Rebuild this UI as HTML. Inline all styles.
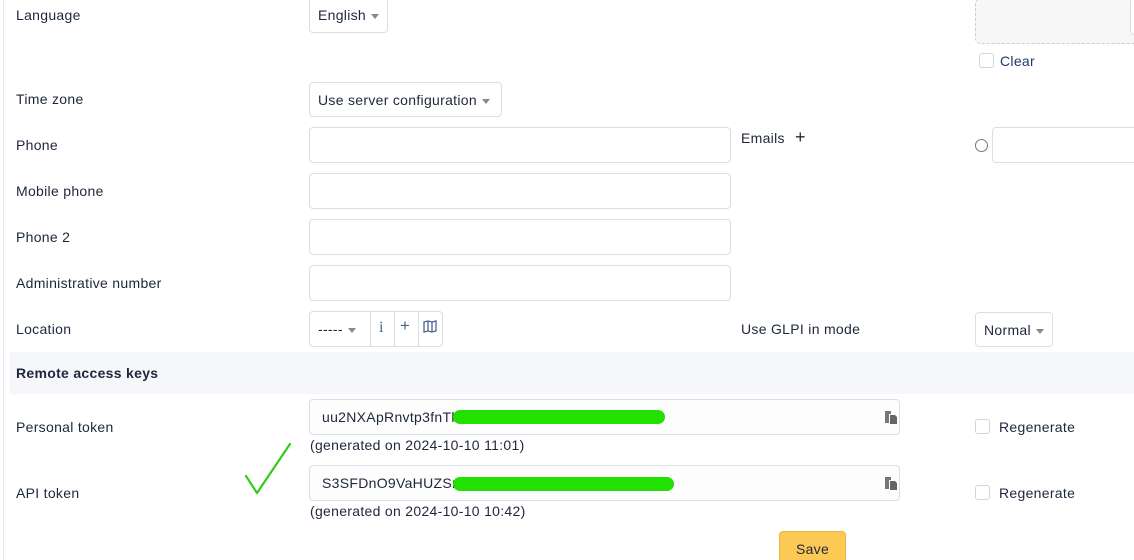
<!DOCTYPE html>
<html><head><meta charset="utf-8"><style>
*{box-sizing:border-box;margin:0;padding:0}
html,body{width:1134px;height:560px;overflow:hidden}
body{background:#fff;position:relative;font-family:"Liberation Sans",sans-serif;font-size:14px;letter-spacing:0.3px;color:#1d273b}
.a{position:absolute;white-space:nowrap}
.inp{position:absolute;border:1px solid #dadfe5;border-radius:4px;background:#fff}
.sel{position:absolute;border:1px solid #dadfe5;border-radius:4px;background:#fff;padding:0 8px;line-height:34px;font-size:14px}
.caret{display:inline-block;width:0;height:0;border-left:4px solid transparent;border-right:4px solid transparent;border-top:5px solid #888;margin-left:5px;vertical-align:middle}
.cb{position:absolute;width:15px;height:15px;border:1px solid #d0d5dc;border-radius:3px;background:#fff}
</style></head><body>
<div class="a" style="left:3px;top:0;width:1px;height:560px;background:#e6e8ec"></div>
<div class="a" style="left:16px;top:7px">Language</div>
<div class="sel" style="left:309px;top:0;height:33px;line-height:31px;border-top:none;border-radius:0 0 4px 4px">English<span class="caret"></span></div>
<div class="a" style="left:975px;top:-2px;width:170px;height:46px;border:1px dashed #c9ced6;border-radius:6px;background:#f7f7f8"></div>
<div class="a" style="left:1130px;top:-2px;width:10px;height:37px;border:1px solid #dadfe5;border-radius:4px;background:#fff"></div>
<div class="cb" style="left:979px;top:53px"></div>
<div class="a" style="left:1000px;top:53px;color:#1d3a6a">Clear</div>
<div class="a" style="left:16px;top:91px">Time zone</div>
<div class="sel" style="left:309px;top:82px;height:35px;width:193px">Use server configuration<span class="caret"></span></div>
<div class="a" style="left:16px;top:137px">Phone</div>
<div class="inp" style="left:309px;top:127px;width:422px;height:36px"></div>
<div class="a" style="left:741px;top:127px;line-height:20px">Emails <span style="font-size:18px;margin-left:6px">+</span></div>
<div class="a" style="left:975px;top:139px;width:13px;height:13px;border:1px solid #777;border-radius:50%"></div>
<div class="inp" style="left:992px;top:127px;width:150px;height:36px"></div>
<div class="a" style="left:16px;top:183px">Mobile phone</div>
<div class="inp" style="left:309px;top:173px;width:422px;height:36px"></div>
<div class="a" style="left:16px;top:229px">Phone 2</div>
<div class="inp" style="left:309px;top:219px;width:422px;height:36px"></div>
<div class="a" style="left:16px;top:275px">Administrative number</div>
<div class="inp" style="left:309px;top:265px;width:422px;height:36px"></div>
<div class="a" style="left:16px;top:321px">Location</div>
<div class="inp" style="left:309px;top:311px;width:134px;height:36px"></div>
<div class="a" style="left:318px;top:321px">-----<span class="caret"></span></div>
<div class="a" style="left:370px;top:312px;width:1px;height:34px;background:#dadfe5"></div>
<div class="a" style="left:394px;top:312px;width:1px;height:34px;background:#dadfe5"></div>
<div class="a" style="left:418px;top:312px;width:1px;height:34px;background:#dadfe5"></div>
<div class="a" style="left:379px;top:319px;color:#4a6590;font-family:'Liberation Serif',serif;font-size:16px">i</div>
<div class="a" style="left:400px;top:316px;color:#4a6590;font-size:17px">+</div>
<svg class="a" style="left:423px;top:320px" width="14" height="13" viewBox="0 0 14 13"><path d="M1 2l4-1 4 1 4-1v10l-4 1-4-1-4 1z M5 1v10 M9 2v10" fill="none" stroke="#4a6590" stroke-width="1.3"/></svg>
<div class="a" style="left:741px;top:321px">Use GLPI in mode</div>
<div class="sel" style="left:975px;top:312px;height:35px;width:78px">Normal<span class="caret"></span></div>
<div class="a" style="left:10px;top:352px;width:1124px;height:42px;background:#f6f7fa"></div>
<div class="a" style="left:16px;top:365px;font-weight:bold">Remote access keys</div>
<div class="a" style="left:16px;top:419px">Personal token</div>
<div class="inp" style="left:309px;top:399px;width:591px;height:36px;background:#fdfdfd"></div>
<div class="a" style="left:322px;top:409px">uu2NXApRnvtp3fnTl</div>
<div class="a" style="left:453px;top:410px;width:212px;height:14px;background:#22e000;border-radius:7px"></div>
<svg class="a" style="left:884px;top:410px" width="14" height="14" viewBox="0 0 14 14"><path d="M1 1h6v3h-2v9H1z" fill="#777"/><path d="M6 5h5l2 2v7H6z" fill="#666"/></svg>
<div class="a" style="left:310px;top:437px">(generated on 2024-10-10 11:01)</div>
<div class="cb" style="left:975px;top:419px"></div>
<div class="a" style="left:999px;top:419px">Regenerate</div>
<div class="a" style="left:16px;top:485px">API token</div>
<div class="inp" style="left:309px;top:465px;width:591px;height:36px;background:#fdfdfd"></div>
<div class="a" style="left:322px;top:475px">S3SFDnO9VaHUZSr</div>
<div class="a" style="left:453px;top:477px;width:221px;height:14px;background:#22e000;border-radius:7px"></div>
<svg class="a" style="left:884px;top:476px" width="14" height="14" viewBox="0 0 14 14"><path d="M1 1h6v3h-2v9H1z" fill="#777"/><path d="M6 5h5l2 2v7H6z" fill="#666"/></svg>
<div class="a" style="left:310px;top:503px">(generated on 2024-10-10 10:42)</div>
<div class="cb" style="left:975px;top:485px"></div>
<div class="a" style="left:999px;top:485px">Regenerate</div>
<svg class="a" style="left:240px;top:440px" width="55" height="60" viewBox="0 0 55 60"><path d="M6 36 L17 53 L50 4" fill="none" stroke="#33cc1a" stroke-width="2.2" stroke-linecap="round" stroke-linejoin="round"/></svg>
<div class="a" style="left:779px;top:531px;width:67px;height:36px;background:#fcc955;border:1px solid #e8b440;border-radius:4px;text-align:center;line-height:34px">Save</div>
</body></html>
